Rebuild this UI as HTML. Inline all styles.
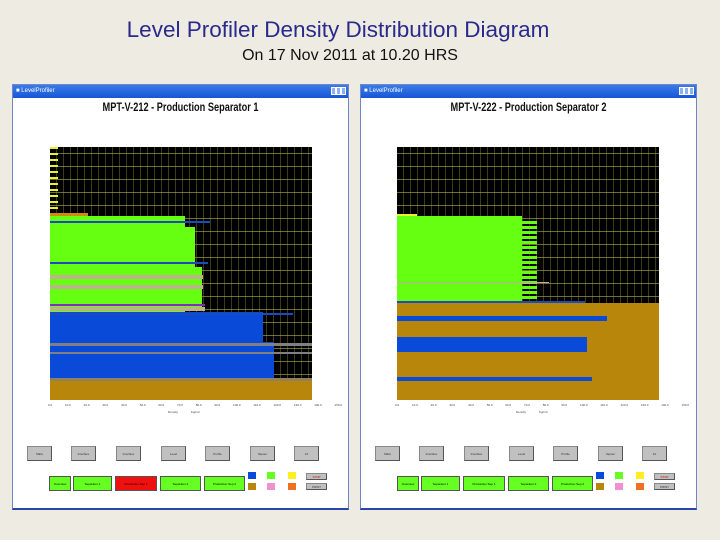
<!DOCTYPE html>
<html><head><meta charset="utf-8"><style>
*{margin:0;padding:0;box-sizing:border-box}
body{width:720px;height:540px;background:#eeece2;position:relative;overflow:hidden;font-family:"Liberation Sans",sans-serif}
.a{position:absolute}
.t1{left:0;width:676px;top:17px;text-align:center;font-size:22.5px;color:#2a2a8c}
.t2{left:0;width:700px;top:47px;text-align:center;font-size:16px;color:#111}
.win{background:#fff;border:1px solid #6f86c8;border-bottom:2px solid #2a45a8}
.tb{left:0;top:0;right:0;height:13px;background:linear-gradient(#3a7be8,#1656d6);color:#fff;font-size:6px;padding:3px 0 0 3px}
.tbb{top:2px;width:5px;height:8px;background:#8fb0f0;border:1px solid #fff}
.ct{font-size:11.5px;font-weight:bold;text-align:center;transform:scaleX(.8);color:#111}
.plot{background:#000;overflow:hidden}
.grid{left:0;top:0;right:0;bottom:0;background:repeating-linear-gradient(90deg,transparent 0 6px,rgba(170,170,70,.35) 6px 7px),repeating-linear-gradient(0deg,transparent 0 12px,rgba(200,200,90,.55) 12px 13px)}
.b{position:absolute;left:0}
.yl{font-size:3px;color:#444;white-space:nowrap;word-spacing:12px}
.btn{background:#c0c0c0;border:1px solid #888;border-right-color:#555;border-bottom-color:#555;height:15px;font-size:3px;color:#333;text-align:center;line-height:14px}
.gb{background:#66ff22;border:1px solid #555;height:15px;font-size:3px;text-align:center;line-height:14px}
.lg{width:8px;height:7px}
</style></head><body>
<div class="a t1">Level Profiler Density Distribution Diagram</div>
<div class="a t2">On 17 Nov 2011 at 10.20 HRS</div>

<!-- LEFT WINDOW -->
<div class="a win" style="left:12px;top:84px;width:337px;height:426px">
 <div class="a tb">&#9632; LevelProfiler</div>
 <div class="a tbb" style="right:12px"></div><div class="a tbb" style="right:7px"></div><div class="a tbb" style="right:2px"></div>
 <div class="a ct" style="left:0;right:0;top:17px">MPT-V-212 - Production Separator 1</div>
 <div class="a plot" style="left:37px;top:62px;width:262px;height:253px">
  <div class="a grid"></div>
  <div class="b" style="top:0;width:8px;height:66px;background:repeating-linear-gradient(#ee3 0 2px,transparent 2px 6px)"></div>
  <div class="b" style="top:66px;width:38px;height:3px;background:#d08a10"></div>
  <div class="b" style="top:69px;width:135px;height:96px;background:#66ff11"></div>
  <div class="b" style="top:80px;width:145px;height:50px;background:#66ff11"></div>
  <div class="b" style="top:120px;width:152px;height:40px;background:#66ff11"></div>
  <div class="b" style="top:74px;width:160px;height:2px;background:#1a4cc0"></div>
  <div class="b" style="top:115px;width:158px;height:2px;background:#1a4cc0"></div>
  <div class="b" style="top:128px;width:153px;height:4px;background:#c0b090"></div>
  <div class="b" style="top:138px;width:153px;height:4px;background:#c0b090"></div>
  <div class="b" style="top:157px;width:155px;height:2px;background:#8030c0"></div>
  <div class="b" style="top:160px;width:155px;height:4px;background:#c0b090"></div>
  <div class="b" style="top:165px;width:180px;height:66px;background:#0a4ad8"></div>
  <div class="b" style="top:165px;width:213px;height:45px;background:#0a4ad8"></div>
  <div class="b" style="top:195px;width:224px;height:36px;background:#0a4ad8"></div>
  <div class="b" style="top:166px;width:243px;height:2px;background:#1a4cc0"></div>
  <div class="b" style="top:196px;width:262px;height:3px;background:#808080"></div>
  <div class="b" style="top:205px;width:262px;height:2px;background:#808080"></div>
  <div class="b" style="top:231px;width:262px;height:3px;background:#908060"></div>
  <div class="b" style="top:234px;width:262px;height:19px;background:#b8860b"></div>
 </div>
 <div class="a yl" style="left:35px;top:318px">0.0 10.0 20.0 30.0 40.0 50.0 60.0 70.0 80.0 90.0 100.0 110.0 120.0 130.0 140.0 150.0</div>
 <div class="a yl" style="left:155px;top:325px">Density Kg/m3</div>
 <div class="a btn" style="left:14px;top:361px;width:25px">MEG</div>
 <div class="a btn" style="left:58px;top:361px;width:25px">Interface</div>
 <div class="a btn" style="left:103px;top:361px;width:25px">Interface</div>
 <div class="a btn" style="left:148px;top:361px;width:25px">Level</div>
 <div class="a btn" style="left:192px;top:361px;width:25px">Profile</div>
 <div class="a btn" style="left:237px;top:361px;width:25px">Vapour</div>
 <div class="a btn" style="left:281px;top:361px;width:25px">Inf</div>
 <div class="a gb" style="left:36px;top:391px;width:22px">Overview</div>
 <div class="a gb" style="left:60px;top:391px;width:39px">Separator 1</div>
 <div class="a gb" style="left:102px;top:391px;width:42px;background:#f01010">Production Sep 1</div>
 <div class="a gb" style="left:147px;top:391px;width:41px">Separator 2</div>
 <div class="a gb" style="left:191px;top:391px;width:41px">Production Sep 2</div>
 <div class="a lg" style="left:235px;top:387px;background:#0a4ad8"></div>
 <div class="a lg" style="left:254px;top:387px;background:#66ff22"></div>
 <div class="a lg" style="left:275px;top:387px;background:#ffee22"></div>
 <div class="a lg" style="left:235px;top:398px;background:#b8860b"></div>
 <div class="a lg" style="left:254px;top:398px;background:#f090d0"></div>
 <div class="a lg" style="left:275px;top:398px;background:#f07020"></div>
 <div class="a btn" style="left:293px;top:388px;width:21px;height:7px;line-height:6px;color:#c00">STOP</div>
 <div class="a btn" style="left:293px;top:398px;width:21px;height:7px;line-height:6px">PRINT</div>
</div>

<!-- RIGHT WINDOW -->
<div class="a win" style="left:360px;top:84px;width:337px;height:426px">
 <div class="a tb">&#9632; LevelProfiler</div>
 <div class="a tbb" style="right:12px"></div><div class="a tbb" style="right:7px"></div><div class="a tbb" style="right:2px"></div>
 <div class="a ct" style="left:0;right:0;top:17px">MPT-V-222 - Production Separator 2</div>
 <div class="a plot" style="left:36px;top:62px;width:262px;height:253px">
  <div class="a grid"></div>
  <div class="b" style="top:67px;width:20px;height:2px;background:#ee3"></div>
  <div class="b" style="top:69px;width:125px;height:87px;background:#66ff11"></div>
  <div class="b" style="top:74px;width:140px;height:80px;background:repeating-linear-gradient(#66ff11 0 3px,transparent 3px 5px)"></div>
  <div class="b" style="top:135px;width:152px;height:1px;background:#d0a0b0"></div>
  <div class="b" style="top:154px;width:188px;height:2px;background:#1a4cc0"></div>
  <div class="b" style="top:156px;width:262px;height:97px;background:#b8860b"></div>
  <div class="b" style="top:169px;width:210px;height:5px;background:#0a4ad8"></div>
  <div class="b" style="top:190px;width:190px;height:15px;background:#0a4ad8"></div>
  <div class="b" style="top:230px;width:195px;height:4px;background:#0a4ad8"></div>
 </div>
 <div class="a yl" style="left:34px;top:318px">0.0 10.0 20.0 30.0 40.0 50.0 60.0 70.0 80.0 90.0 100.0 110.0 120.0 130.0 140.0 150.0</div>
 <div class="a yl" style="left:155px;top:325px">Density Kg/m3</div>
 <div class="a btn" style="left:14px;top:361px;width:25px">MEG</div>
 <div class="a btn" style="left:58px;top:361px;width:25px">Interface</div>
 <div class="a btn" style="left:103px;top:361px;width:25px">Interface</div>
 <div class="a btn" style="left:148px;top:361px;width:25px">Level</div>
 <div class="a btn" style="left:192px;top:361px;width:25px">Profile</div>
 <div class="a btn" style="left:237px;top:361px;width:25px">Vapour</div>
 <div class="a btn" style="left:281px;top:361px;width:25px">Inf</div>
 <div class="a gb" style="left:36px;top:391px;width:22px">Overview</div>
 <div class="a gb" style="left:60px;top:391px;width:39px">Separator 1</div>
 <div class="a gb" style="left:102px;top:391px;width:42px">Production Sep 1</div>
 <div class="a gb" style="left:147px;top:391px;width:41px">Separator 2</div>
 <div class="a gb" style="left:191px;top:391px;width:41px">Production Sep 2</div>
 <div class="a lg" style="left:235px;top:387px;background:#0a4ad8"></div>
 <div class="a lg" style="left:254px;top:387px;background:#66ff22"></div>
 <div class="a lg" style="left:275px;top:387px;background:#ffee22"></div>
 <div class="a lg" style="left:235px;top:398px;background:#b8860b"></div>
 <div class="a lg" style="left:254px;top:398px;background:#f090d0"></div>
 <div class="a lg" style="left:275px;top:398px;background:#f07020"></div>
 <div class="a btn" style="left:293px;top:388px;width:21px;height:7px;line-height:6px;color:#c00">STOP</div>
 <div class="a btn" style="left:293px;top:398px;width:21px;height:7px;line-height:6px">PRINT</div>
</div>
</body></html>
